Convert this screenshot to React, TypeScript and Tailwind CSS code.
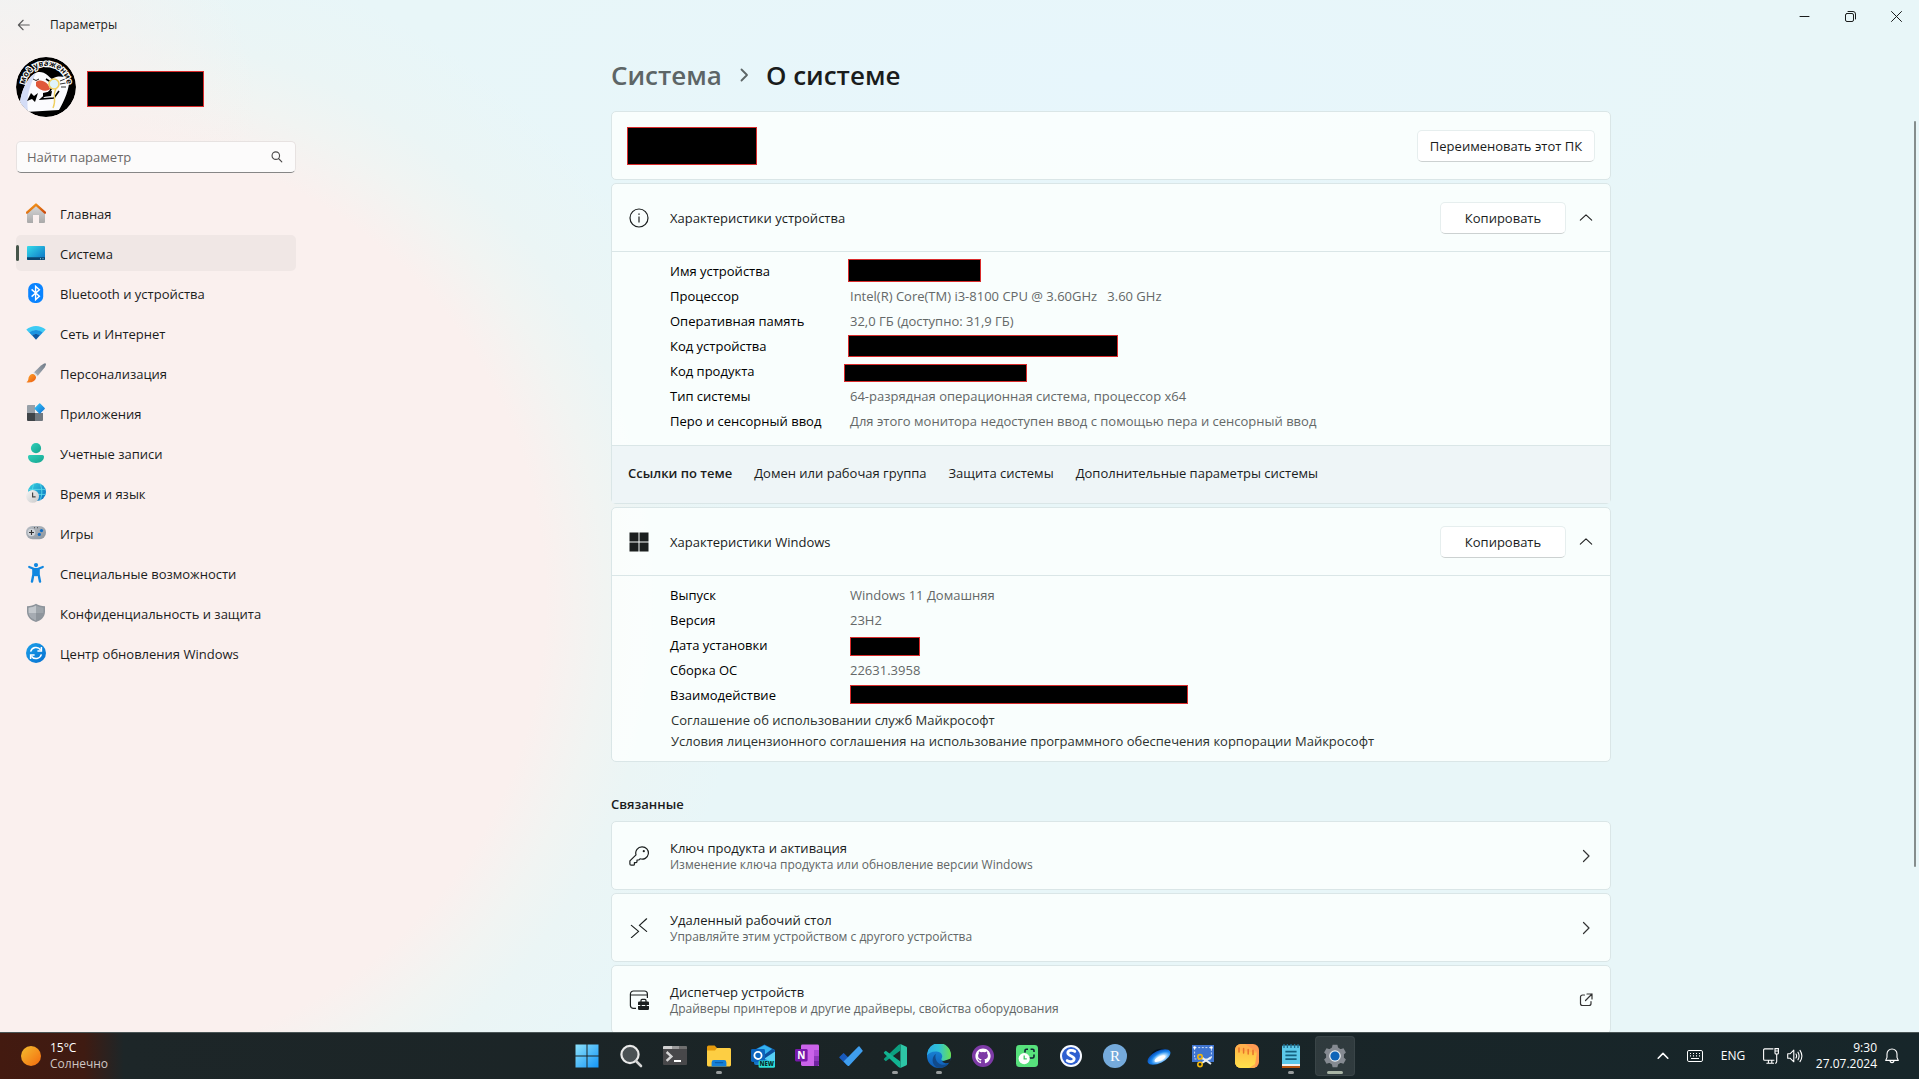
import React from "react";

/* ---------- Avatar ---------- */

const Avatar = () => (
  <svg viewBox="0 0 60 60" className="size-[60px] shrink-0 rounded-full" role="img" aria-label="Аватар">
    <defs>
      <path id="avatarArc" d="M9 29 A21 20 0 0 1 51 29" />
      <clipPath id="avatarClip">
        <circle cx="30" cy="30" r="30" />
      </clipPath>
    </defs>
    <g clipPath="url(#avatarClip)">
      <rect width="60" height="60" fill="#000" />
      <path d="M4 46 C6 30 14 17 22 15 C29 14 33 20 36 22 C42 18 48 20 53 21 C54 32 48 44 43 53 L10 55 Z" fill="#fbfbfe" />
      <path d="M4 46 C5 34 12 19 20 16 C14 28 10 38 12 55 Z" fill="#d3dcf6" />
      <path d="M30 22 L38 27 L34 34 L25 42 L38 41 L43 34" fill="none" stroke="#000" strokeWidth="1.6" />
      <path d="M27 36 L36 34 L35 39 L27 40 Z" fill="#000" />
      <path d="M20 25 C25 21 33 26 34 32 C31 35 24 34 20 29 Z" fill="#e0583a" />
      <path d="M17 22 q3 3 6 0" fill="none" stroke="#222" strokeWidth="1" />
      <path d="M11 44 L15 36 L18 39 L22 36 L19 45 L16 42 Z" fill="#000" />
      <circle cx="38" cy="27" r="5" fill="#dff3fb" stroke="#f0d060" strokeWidth="1.6" />
      <path d="M40 32 C36 38 41 43 37 51" fill="none" stroke="#f0d060" strokeWidth="1.4" />
      <path d="M44 24 l5 -2 M44 27 l6 -1 M45 30 l5 0" stroke="#333" strokeWidth="1" />
      <text fontSize="8" fontWeight="700" fill="#111" stroke="#fff" strokeWidth="2.2" paintOrder="stroke" textAnchor="middle" fontFamily="Open Sans, sans-serif">
        <textPath href="#avatarArc" startOffset="50%">моё уважение</textPath>
      </text>
    </g>
  </svg>
);

/* ---------- Navigation icons ---------- */

const HomeIcon = () => (
  <svg viewBox="0 0 20 20" className="size-5">
    <defs>
      <linearGradient id="homeG" x1="0" y1="0" x2="0" y2="1">
        <stop offset="0" stopColor="#d9d9d9" />
        <stop offset="1" stopColor="#a9a9a9" />
      </linearGradient>
      <linearGradient id="homeR" x1="0" y1="0" x2="1" y2="1">
        <stop offset="0" stopColor="#f9a01b" />
        <stop offset="1" stopColor="#cc4a0c" />
      </linearGradient>
    </defs>
    <path d="M1 9.5 L10 2 L19 9.5 V19 a1 1 0 0 1 -1 1 H13 V12 H7 V20 H2 a1 1 0 0 1 -1 -1 Z" fill="url(#homeG)" />
    <path d="M1 9.6 L10 1.6 L19 9.6" fill="none" stroke="url(#homeR)" strokeWidth="2.4" strokeLinejoin="round" strokeLinecap="round" />
  </svg>
);

const SystemIcon = () => (
  <svg viewBox="0 0 20 20" className="size-5">
    <defs>
      <linearGradient id="sysG" x1="0" y1="0" x2="1" y2="1">
        <stop offset="0" stopColor="#35dcea" />
        <stop offset="1" stopColor="#0b6fc4" />
      </linearGradient>
    </defs>
    <rect x="1" y="3" width="18" height="14" rx="1" fill="url(#sysG)" />
    <path d="M1 14.3 H19 V16 a1 1 0 0 1 -1 1 H2 a1 1 0 0 1 -1 -1 Z" fill="#0b4670" />
    <path d="M14 15.2 h1 v1 h-1 z M16.5 15.2 h1 v1 h-1 z" fill="#8fd8ee" />
  </svg>
);

const BluetoothIcon = () => (
  <svg viewBox="0 0 20 20" className="size-5">
    <rect x="2.2" y="0" width="15" height="20" rx="6.5" fill="#0a84ff" />
    <path d="M5.6 6.4 L13.4 13.2 L9.6 16.6 V3.4 L13.4 6.8 L5.6 13.6" fill="none" stroke="#fff" strokeWidth="1.4" />
  </svg>
);

const WifiIcon = () => (
  <svg viewBox="0 0 20 20" className="size-5">
    <path d="M0.3 6.6 C6 1.8 14 1.8 19.7 6.6 L16.8 9.8 C13 6.4 7 6.4 3.2 9.8 Z" fill="#3dcbf4" />
    <path d="M3.2 9.6 C7 6.2 13 6.2 16.8 9.6 L13.8 12.8 C11.5 10.8 8.5 10.8 6.2 12.8 Z" fill="#1a93e0" />
    <path d="M6.2 12.6 C8.5 10.6 11.5 10.6 13.8 12.6 L10 16.8 Z" fill="#0c59a4" />
  </svg>
);

const BrushIcon = () => (
  <svg viewBox="0 0 20 20" className="size-5">
    <defs>
      <linearGradient id="brG" x1="1" y1="0" x2="0" y2="1">
        <stop offset="0" stopColor="#6f7b87" />
        <stop offset="1" stopColor="#a9b1ba" />
      </linearGradient>
      <linearGradient id="brO" x1="0" y1="0" x2="1" y2="1">
        <stop offset="0" stopColor="#ffa92e" />
        <stop offset="1" stopColor="#ea5a10" />
      </linearGradient>
    </defs>
    <path d="M19.6 0.4 C20.6 1.4 19.4 3.4 18 5.3 L11.4 13.2 L7.6 9.8 L15 2.6 C17 0.9 18.8 -0.2 19.6 0.4 Z" fill="url(#brG)" />
    <path d="M6.4 11 C8 10.6 10.4 12.8 10 14.8 C9.4 18.6 4.6 20.2 0.4 19.2 C2.4 18.4 2.2 16.6 2.6 14.6 C3.2 12.4 4.8 11.2 6.4 11 Z" fill="url(#brO)" />
    <path d="M7.4 10 L8.4 9.2 L11.8 12.4 L10.8 13.6 Z" fill="#dfe5ea" />
  </svg>
);

const AppsIcon = () => (
  <svg viewBox="0 0 20 20" className="size-5">
    <defs>
      <linearGradient id="apD" x1="0" y1="0" x2="1" y2="1">
        <stop offset="0" stopColor="#35c3f5" />
        <stop offset="1" stopColor="#0f74d6" />
      </linearGradient>
    </defs>
    <path d="M1 3 a1 1 0 0 1 1 -1 H9 V10 H1 Z" fill="#97a0a8" />
    <path d="M1 10 H9 V18 H2 a1 1 0 0 1 -1 -1 Z" fill="#3f4448" />
    <path d="M9 10 H17 V17 a1 1 0 0 1 -1 1 H9 Z" fill="#70787f" />
    <path d="M13.7 1 L18.2 5.5 L13.7 10 L9.2 5.5 Z" fill="url(#apD)" stroke="url(#apD)" strokeWidth="1.4" strokeLinejoin="round" />
  </svg>
);

const AccountIcon = () => (
  <svg viewBox="0 0 20 20" className="size-5">
    <defs>
      <linearGradient id="acG" x1="0" y1="0" x2="1" y2="1">
        <stop offset="0" stopColor="#2fd0ba" />
        <stop offset="1" stopColor="#15a48e" />
      </linearGradient>
    </defs>
    <circle cx="10" cy="5.1" r="5.1" fill="url(#acG)" />
    <path d="M3.6 12 H16.4 A1.6 1.6 0 0 1 18 13.6 C18 17.8 14.6 20 10 20 C5.4 20 2 17.8 2 13.6 A1.6 1.6 0 0 1 3.6 12 Z" fill="url(#acG)" />
  </svg>
);

const TimeIcon = () => (
  <svg viewBox="0 0 20 20" className="size-5">
    <defs>
      <linearGradient id="tmG" x1="0" y1="0" x2="1" y2="1">
        <stop offset="0" stopColor="#36d6df" />
        <stop offset="1" stopColor="#0a6cc0" />
      </linearGradient>
      <linearGradient id="tmC" x1="0" y1="0" x2="1" y2="1">
        <stop offset="0" stopColor="#f6f6f6" />
        <stop offset="1" stopColor="#c8c8c8" />
      </linearGradient>
    </defs>
    <circle cx="11" cy="9" r="9" fill="url(#tmG)" />
    <path d="M3 6.4 H19.4 M3 11.4 H19.4 M8 0.6 C5.6 6 6 12 8 17 M14 0.6 C16.4 6 16.4 12 14 17.2" stroke="#5fe0ee" strokeWidth="0.8" fill="none" />
    <circle cx="6.6" cy="13.4" r="6.4" fill="url(#tmC)" />
    <path d="M6.6 9.4 V13.8 H9.6" stroke="#444" strokeWidth="1.2" fill="none" />
  </svg>
);

const GamesIcon = () => (
  <svg viewBox="0 0 20 20" className="size-5">
    <defs>
      <linearGradient id="gmG" x1="0" y1="0" x2="1" y2="1">
        <stop offset="0" stopColor="#b9bfc6" />
        <stop offset="1" stopColor="#8c949c" />
      </linearGradient>
    </defs>
    <rect x="0" y="3" width="20" height="13.2" rx="6.4" fill="url(#gmG)" />
    <circle cx="5.5" cy="9.5" r="3.8" fill="#d0d4d9" />
    <path d="M5.5 7 V12 M3 9.5 H8" stroke="#333" strokeWidth="1.1" />
    <circle cx="15.5" cy="7.6" r="1.6" fill="#0f6cc4" />
    <circle cx="13.3" cy="11.4" r="1.6" fill="#0f6cc4" />
    <path d="M8 4.2 h1 v1 h-1 z M11 4.2 h1 v1 h-1 z" fill="#444" />
  </svg>
);

const AccessIcon = () => (
  <svg viewBox="0 0 20 20" className="size-5">
    <circle cx="10" cy="2.1" r="2.1" fill="#1187e0" />
    <path d="M3.2 4 L8.2 6 H11.8 L16.8 4" stroke="#1187e0" strokeWidth="2.2" strokeLinecap="round" strokeLinejoin="round" fill="none" />
    <path d="M7.4 6.4 H12.6 V11.6 L14 18.6 M12.6 11.6 L10 12 L7.4 11.6 M7.4 6.4 V11.6 L6 18.6" stroke="#1187e0" strokeWidth="2.4" strokeLinecap="round" strokeLinejoin="round" fill="none" />
    <path d="M7 6 H13 V12 H7 Z" fill="#1187e0" />
  </svg>
);

const ShieldIcon = () => (
  <svg viewBox="0 0 20 20" className="size-5">
    <path d="M10 0.8 C12.4 2.4 15.4 3.2 19 3.3 V8.4 C19 13.8 15.2 17.2 10 19 C4.8 17.2 1 13.8 1 8.4 V3.3 C4.6 3.2 7.6 2.4 10 0.8 Z" fill="#8d949b" />
    <path d="M10 2.6 C12 3.8 14.6 4.5 17.5 4.7 V8.6 C17.5 13 14.4 15.8 10 17.4 Z" fill="#9ea5ab" />
    <path d="M10 2.6 C8 3.8 5.4 4.5 2.5 4.7 V8.6 C2.5 13 5.6 15.8 10 17.4 Z" fill="#c2c7cc" />
    <path d="M2.7 10 H17.3 C16.6 13.6 13.8 16 10 17.4 C6.2 16 3.4 13.6 2.7 10 Z" fill="#707880" opacity="0.35" />
  </svg>
);

const UpdateIcon = () => (
  <svg viewBox="0 0 20 20" className="size-5">
    <defs>
      <linearGradient id="upG" x1="0" y1="0" x2="1" y2="1">
        <stop offset="0" stopColor="#1ba1ea" />
        <stop offset="1" stopColor="#0670d0" />
      </linearGradient>
    </defs>
    <circle cx="10" cy="10" r="10" fill="url(#upG)" />
    <path d="M4.6 8.6 A5.6 5.6 0 0 1 14.6 6.8 M15.4 11.4 A5.6 5.6 0 0 1 5.4 13.2" fill="none" stroke="#fff" strokeWidth="1.5" />
    <path d="M15.4 4 V8 H11.4 M4.6 16 V12 H8.6" fill="none" stroke="#fff" strokeWidth="1.5" />
  </svg>
);

/* ---------- Line icons ---------- */

const Line = ({ d, className = "size-5", width = 1.3, box = 20 }: { d: string; className?: string; width?: number; box?: number }) => (
  <svg viewBox={`0 0 ${box} ${box}`} className={className} fill="none" stroke="currentColor" strokeWidth={width} strokeLinecap="round" strokeLinejoin="round" aria-hidden="true">
    <path d={d} />
  </svg>
);

const InfoIcon = () => (
  <svg viewBox="0 0 20 20" className="size-5" fill="none" stroke="#1b1f1f" strokeWidth="1.2" aria-hidden="true">
    <circle cx="10" cy="10" r="9" />
    <path d="M10 8.6 V14.4" />
    <path d="M10 5.4 V6.8" strokeWidth="1.4" />
  </svg>
);

const WindowsIcon = () => (
  <svg viewBox="0 0 20 20" className="size-5" fill="#1b1f1f" aria-hidden="true">
    <path d="M.5 .5 H9.5 V9.5 H.5 Z M10.5 .5 H19.5 V9.5 H10.5 Z M.5 10.5 H9.5 V19.5 H.5 Z M10.5 10.5 H19.5 V19.5 H10.5 Z" />
  </svg>
);

const KeyIcon = () => (
  <svg viewBox="0 0 20 20" className="size-5" fill="none" stroke="#1b1f1f" strokeWidth="1.2" strokeLinejoin="round" aria-hidden="true">
    <path d="M13 .8 A6.2 6.2 0 0 0 7 8.8 L.9 14.9 V18 A1.2 1.2 0 0 0 2.1 19.2 H4.4 A1 1 0 0 0 5.4 18.2 V16.6 H7 A1 1 0 0 0 8 15.6 V14 H9.4 A1 1 0 0 0 10.2 13.6 L11 12.8 A6.2 6.2 0 1 0 13 .8 Z" />
    <circle cx="14.8" cy="5.2" r="1.1" fill="#1b1f1f" stroke="none" />
  </svg>
);

const DeviceManagerIcon = () => (
  <svg viewBox="0 0 20 20" className="size-5" fill="none" stroke="#1b1f1f" strokeWidth="1.2" aria-hidden="true">
    <path d="M7 18.4 H4.4 A3 3 0 0 1 1.4 15.4 V4 A3 3 0 0 1 4.4 1 H15.4 A3 3 0 0 1 18.4 4 V8 M1.4 5 H18.4" />
    <path d="M12 12 V10.4 A1 1 0 0 1 13 9.4 H16 A1 1 0 0 1 17 10.4 V12" />
    <path d="M9 12.8 A1.2 1.2 0 0 1 10.2 11.6 H18.8 A1.2 1.2 0 0 1 20 12.8 V15 H9 Z M9 16 H20 V18.8 A1.2 1.2 0 0 1 18.8 20 H10.2 A1.2 1.2 0 0 1 9 18.8 Z" fill="#1b1f1f" stroke="none" />
    <path d="M12 14 V17.4 M17 14 V17.4" stroke="#1b1f1f" strokeWidth="1.4" />
  </svg>
);

/* ---------- Taskbar icons ---------- */

const T = ({ children }: { children: React.ReactNode }) => (
  <svg viewBox="0 0 24 24" className="size-6" aria-hidden="true">
    {children}
  </svg>
);

const StartIcon = () => (
  <T>
    <defs>
      <linearGradient id="stG" gradientUnits="userSpaceOnUse" x1="0" y1="0" x2="24" y2="24">
        <stop offset="0" stopColor="#8fe3fb" />
        <stop offset="1" stopColor="#1193f5" />
      </linearGradient>
    </defs>
    <path d="M.5 .5 H11.5 V11.5 H.5 Z M12.5 .5 H23.5 V11.5 H12.5 Z M.5 12.5 H11.5 V23.5 H.5 Z M12.5 12.5 H23.5 V23.5 H12.5 Z" fill="url(#stG)" />
  </T>
);
const SearchTask = () => (
  <T>
    <circle cx="11" cy="10.5" r="8.6" fill="#4a5154" stroke="#e9e9e9" strokeWidth="2.2" />
    <path d="M17 17 L22 22" stroke="#d5d5d5" strokeWidth="2.6" strokeLinecap="round" />
  </T>
);
const TerminalIcon = () => (
  <T>
    <rect x="0" y="3" width="24" height="18" rx="1" fill="#48484a" />
    <path d="M1 2 H9 V5 H0 V3 A1 1 0 0 1 1 2 Z" fill="#d0d0d0" />
    <path d="M9 2 H16 V5 H9 Z" fill="#9b9b9b" />
    <path d="M16 2 H23 A1 1 0 0 1 24 3 V5 H16 Z" fill="#6f6f6f" />
    <path d="M3.6 8 L8.4 12.4 L3.6 16.8" fill="none" stroke="#d6d6d6" strokeWidth="2.4" />
    <path d="M11 17 H18" stroke="#fff" strokeWidth="2" />
  </T>
);
const ExplorerIcon = () => (
  <T>
    <path d="M0 3 A1.6 1.6 0 0 1 1.6 1.4 H7.6 L10 4 H22.4 A1.6 1.6 0 0 1 24 5.6 V8 H0 Z" fill="#e59a0c" />
    <path d="M0 6.6 H8 L10 4 H22.4 A1.6 1.6 0 0 1 24 5.6 V21 A1.4 1.4 0 0 1 22.6 22.4 H1.4 A1.4 1.4 0 0 1 0 21 Z" fill="#fdce43" />
    <path d="M4.6 22.4 V18.4 A2.4 2.4 0 0 1 7 16 H17 A2.4 2.4 0 0 1 19.4 18.4 V22.4 Z" fill="#1580d8" />
    <path d="M8.4 18.6 H15.6" stroke="#0b5ea8" strokeWidth="1.4" strokeLinecap="round" />
  </T>
);
const OutlookIcon = () => (
  <T>
    <path d="M3 6 L13.5 .4 L24 6 V19 A2 2 0 0 1 22 21 H5 A2 2 0 0 1 3 19 Z" fill="#1673c6" />
    <path d="M6 5 L13.5 1.2 L21 5 V12 L13.5 16 L6 12 Z" fill="#35b2f0" />
    <path d="M13 11 L21 5 L24 6.6 V9 L14 15 Z" fill="#0d4f9c" />
    <path d="M13.5 14.6 L24 7.4 V20 H13.5 Z" fill="#56d0f7" />
    <path d="M13.5 14.6 L24 20.5 H5 Z" fill="#1b87dc" />
    <rect x="0" y="5" width="14" height="13" rx="1.4" fill="#0c64bd" />
    <circle cx="7" cy="11.4" r="3.6" fill="none" stroke="#fff" strokeWidth="1.8" />
    <rect x="7.6" y="16.4" width="16.4" height="7.4" rx="1.4" fill="#2ce0d8" />
    <text x="15.8" y="22.4" fontSize="6" fontWeight="800" textAnchor="middle" fill="#09302f" fontFamily="Open Sans, sans-serif">NEW</text>
  </T>
);
const OneNoteIcon = () => (
  <T>
    <path d="M7.4 .5 H22.6 A1.4 1.4 0 0 1 24 1.9 V22 H7.4 A1.4 1.4 0 0 1 6 20.6 V1.9 A1.4 1.4 0 0 1 7.4 .5 Z" fill="#cb63ea" />
    <path d="M19 6 H24 V12 H19 Z" fill="#ad4bd6" />
    <path d="M19 12 H24 V17 H19 Z" fill="#8c35b9" />
    <path d="M19 17 H24 V20.6 A1.4 1.4 0 0 1 22.6 22 H19 Z" fill="#7023a0" />
    <rect x="0" y="5" width="12.6" height="12.4" rx="1.3" fill="#7719aa" />
    <text x="6.3" y="14.8" fontSize="10" fontWeight="700" textAnchor="middle" fill="#fff" fontFamily="Open Sans, sans-serif">N</text>
  </T>
);
const TodoIcon = () => (
  <T>
    <path d="M4 9.4 L.6 12.8 A.8 .8 0 0 0 .6 14 L8 21.2 L12.6 16.8 L5.2 9.4 A.8 .8 0 0 0 4 9.4 Z" fill="#195abd" />
    <path d="M19.4 2.6 L4.6 17.6 L8.4 21.4 A1.4 1.4 0 0 0 10.4 21.4 L23.4 7.6 A1 1 0 0 0 23.4 6.2 L20.6 2.6 A.9 .9 0 0 0 19.4 2.6 Z" fill="#3f9eee" />
  </T>
);
const VSCodeIcon = () => (
  <T>
    <path d="M17.4 0 L23 2.4 A1.6 1.6 0 0 1 24 4 V20 A1.6 1.6 0 0 1 23 21.6 L17.4 24 Z" fill="#2dc6a6" />
    <path d="M17.4 0 L15.4 1 L1.2 14.4 A.9 .9 0 0 0 1.2 15.8 L2.8 17.2 L17.4 6.4 Z" fill="#0c9f80" />
    <path d="M17.4 24 L15.4 23 L1.2 9.4 A.9 .9 0 0 1 1.2 8 L2.8 6.8 L17.4 17.6 Z" fill="#12b391" />
  </T>
);
const EdgeIcon = () => (
  <T>
    <defs>
      <linearGradient id="edA" x1="0" y1="0" x2="1" y2="0">
        <stop offset="0" stopColor="#2aa9e8" />
        <stop offset=".5" stopColor="#2fc2d6" />
        <stop offset="1" stopColor="#6be04e" />
      </linearGradient>
      <linearGradient id="edB" x1="0" y1="0" x2="0" y2="1">
        <stop offset="0" stopColor="#1c8fdc" />
        <stop offset="1" stopColor="#0f5db8" />
      </linearGradient>
    </defs>
    <circle cx="12" cy="12" r="12" fill="url(#edB)" />
    <path d="M0 11.4 A12 12 0 0 1 24 10.8 C24.4 15 21 17.2 17.6 17 C14.8 16.8 13.8 15.6 14.6 14.4 C16.4 11.6 14.2 7.6 9.6 7.4 C4.8 7.2 1.4 9 0 11.4 Z" fill="url(#edA)" />
    <path d="M8.4 12.4 C8.4 17 12 20.8 16.8 20.8 C19.4 20.8 21.4 19.8 22.6 18.6 A12 12 0 0 1 12.6 24 C8 23.6 5.4 19.6 5.6 16 C5.8 13 7 11 9.4 9.8 C8.6 10.6 8.4 11.4 8.4 12.4 Z" fill="#114a8b" />
    <path d="M22.6 18.6 C20 20 17 19.4 15 17.6 L24 14.6 Z" fill="#1b2528" />
  </T>
);
const GithubIcon = () => (
  <T>
    <circle cx="12" cy="12" r="11" fill="#7d3aa6" />
    <path d="M12 4.4 C7.8 4.4 4.4 7.8 4.4 12 C4.4 15.4 6.6 18.2 9.6 19.2 C10 19.3 10.1 19 10.1 18.8 V17.4 C8 17.9 7.5 16.4 7.5 16.4 C7.2 15.5 6.7 15.3 6.7 15.3 C6 14.8 6.8 14.8 6.8 14.8 C7.5 14.9 7.9 15.6 7.9 15.6 C8.6 16.8 9.7 16.4 10.1 16.2 C10.2 15.7 10.4 15.4 10.6 15.2 C8.9 15 7.1 14.4 7.1 11.5 C7.1 10.6 7.4 9.9 7.9 9.4 C7.8 9.2 7.6 8.4 8 7.4 C8 7.4 8.6 7.2 10.1 8.2 A7 7 0 0 1 13.9 8.2 C15.4 7.2 16 7.4 16 7.4 C16.4 8.4 16.2 9.2 16.1 9.4 C16.6 9.9 16.9 10.6 16.9 11.5 C16.9 14.4 15.1 15 13.4 15.2 C13.7 15.4 13.9 15.9 13.9 16.6 V18.8 C13.9 19 14 19.3 14.4 19.2 C17.4 18.2 19.6 15.4 19.6 12 C19.6 7.8 16.2 4.4 12 4.4 Z" fill="#fff" />
  </T>
);
const ClockAppIcon = () => (
  <T>
    <rect x="1" y="1" width="22" height="22" rx="3.4" fill="#57e17c" />
    <path d="M10 8.4 V6.6 A1.4 1.4 0 0 1 11.4 5.2 H13 M15.6 5.2 H17.6 A1.4 1.4 0 0 1 19 6.6 V8 M19 10.6 V12.6 A1.4 1.4 0 0 1 17.6 14 H14" fill="none" stroke="#123" strokeWidth="1.6" />
    <circle cx="9.2" cy="14.6" r="5.6" fill="#fff" />
    <path d="M9.2 11.6 V14.8 H11.8" fill="none" stroke="#40c868" strokeWidth="1.3" />
  </T>
);
const SIcon = () => (
  <T>
    <circle cx="12" cy="12" r="11" fill="#f7f9ff" />
    <circle cx="12" cy="12" r="9" fill="#2f5fd0" />
    <path d="M15.8 7.4 C13 5.4 8.8 6.4 8.8 9 C9 12.2 15.2 11.8 15.2 15 C15 17.6 11 18.6 8.2 16.6" fill="none" stroke="#fff" strokeWidth="2.8" strokeLinecap="round" />
  </T>
);
const RIcon = () => (
  <T>
    <circle cx="12" cy="12" r="12" fill="#75aadb" />
    <text x="12" y="17" fontSize="15" textAnchor="middle" fill="#fff" fontFamily="Liberation Serif, serif">R</text>
  </T>
);
const SaucerIcon = () => (
  <T>
    <defs>
      <radialGradient id="saG" cx=".55" cy=".65" r=".6">
        <stop offset="0" stopColor="#fff" />
        <stop offset=".35" stopColor="#b9e2ff" />
        <stop offset=".7" stopColor="#1b86ee" />
        <stop offset="1" stopColor="#0a58c4" />
      </radialGradient>
    </defs>
    <ellipse cx="11" cy="9" rx="7.4" ry="3.6" fill="#07131f" transform="rotate(-20 11 9)" />
    <ellipse cx="12" cy="13" rx="12.4" ry="6" fill="url(#saG)" transform="rotate(-26 12 13)" />
    <ellipse cx="13" cy="14.6" rx="6" ry="2.2" fill="#fff" transform="rotate(-26 13 14.6)" />
  </T>
);
const SnipIcon = () => (
  <T>
    <rect x="1" y="1" width="22" height="17" fill="#3f74cf" />
    <rect x="3.6" y="3.6" width="16.8" height="11.4" fill="none" stroke="#c9dbf5" strokeWidth="1" strokeDasharray="2 1.6" />
    <circle cx="3.6" cy="3.6" r="1.3" fill="#fff" />
    <circle cx="20.4" cy="3.6" r="1.3" fill="#fff" />
    <path d="M11 13.6 L20 20 M11 19 L20 13.4" stroke="#e8eef4" strokeWidth="2" />
    <circle cx="9" cy="12.8" r="2.2" fill="none" stroke="#f5b80c" strokeWidth="1.6" />
    <circle cx="9" cy="20.4" r="2.2" fill="none" stroke="#f5b80c" strokeWidth="1.6" />
  </T>
);
const StickyIcon = () => (
  <T>
    <defs>
      <linearGradient id="skG" x1="0" y1="0" x2="0" y2="1">
        <stop offset="0" stopColor="#ffbc45" />
        <stop offset="1" stopColor="#ffe14c" />
      </linearGradient>
      <clipPath id="skC">
        <rect width="24" height="24" rx="6" />
      </clipPath>
    </defs>
    <g clipPath="url(#skC)">
      <rect width="24" height="24" fill="#ff9a52" />
      <path d="M0 0 H10 L22 8 L20 24 H0 Z" fill="#ffb04c" />
      <path d="M0 5.4 L21.6 9 L20 20 L14 24 H0 Z" fill="url(#skG)" />
    </g>
    <path d="M4 4 V8 M8.6 4.6 V9 M13.2 5.4 V10 M18 6.2 V10.4" stroke="#e8722a" strokeWidth="1.5" strokeLinecap="round" />
  </T>
);
const NotepadIcon = () => (
  <T>
    <rect x="3" y="1.4" width="18" height="20" rx="1" fill="#5cc9ea" />
    <path d="M5 0 V4 M8.4 0 V4 M12 0 V4 M15.6 0 V4 M19 0 V4" stroke="#1f6f92" strokeWidth="1.3" />
    <path d="M6.4 7.6 H17.6 M6.4 11.4 H17.6 M6.4 15.2 H17.6" stroke="#14607f" strokeWidth="1.7" />
    <rect x="3" y="20" width="18" height="2" fill="#f1f1f1" />
    <rect x="3" y="22" width="18" height="2" fill="#b8560f" />
  </T>
);
const GearIcon = () => (
  <T>
    <g fill="#858a91">
      <circle cx="12" cy="12" r="9" />
      <path d="M9.6 .8 H14.4 L15.4 5 H8.6 Z M9.6 23.2 H14.4 L15.4 19 H8.6 Z" />
      <path d="M9.6 .8 H14.4 L15.4 5 H8.6 Z M9.6 23.2 H14.4 L15.4 19 H8.6 Z" transform="rotate(60 12 12)" />
      <path d="M9.6 .8 H14.4 L15.4 5 H8.6 Z M9.6 23.2 H14.4 L15.4 19 H8.6 Z" transform="rotate(120 12 12)" />
    </g>
    <circle cx="12" cy="12" r="5.8" fill="#e9edf0" />
    <circle cx="12" cy="12" r="4.6" fill="#0f64b8" />
  </T>
);

/* ---------- Shared pieces ---------- */

const Redacted = ({ className }: { className: string }) => (
  <span aria-label="Скрыто" className={`block border border-[#d92b2b] bg-black ${className}`} />
);

const cardClass = "rounded-[5px] border border-[#dae6e7] bg-[#fcfffe]/85";

const PlainButton = ({ children, className }: { children: React.ReactNode; className: string }) => (
  <button className={`h-8 shrink-0 rounded-[5px] border border-[#e6eeee] border-b-[#ccd1d1] bg-white text-center text-[#1a1c1c] ${className}`}>
    {children}
  </button>
);

const UP = "M1.5 10.5 L8 4.5 L14.5 10.5";
const RIGHT = "M5.5 2.5 L11 8 L5.5 13.5";

type Row = { label: string; value?: string; bar?: string };

const deviceRows: Row[] = [
  { label: "Имя устройства", bar: "h-[23px] w-[133px] -ml-0.5" },
  { label: "Процессор", value: "Intel(R) Core(TM) i3-8100 CPU @ 3.60GHz   3.60 GHz" },
  { label: "Оперативная память", value: "32,0 ГБ (доступно: 31,9 ГБ)" },
  { label: "Код устройства", bar: "h-[22px] w-[270px] -ml-0.5" },
  { label: "Код продукта", bar: "h-[18px] w-[183px] -ml-1.5 mt-1" },
  { label: "Тип системы", value: "64-разрядная операционная система, процессор x64" },
  { label: "Перо и сенсорный ввод", value: "Для этого монитора недоступен ввод с помощью пера и сенсорный ввод" },
];

const windowsRows: Row[] = [
  { label: "Выпуск", value: "Windows 11 Домашняя" },
  { label: "Версия", value: "23H2" },
  { label: "Дата установки", bar: "h-[19px] w-[70px] mt-1" },
  { label: "Сборка ОС", value: "22631.3958" },
  { label: "Взаимодействие", bar: "h-[19px] w-[338px]" },
];

const Specs = ({ rows }: { rows: Row[] }) => (
  <dl>
    {rows.map((r) => (
      <div key={r.label} className="flex h-[25px] items-center">
        <dt className="w-[180px] shrink-0 text-black">{r.label}</dt>
        <dd className="whitespace-pre text-[#646868]">{r.bar ? <Redacted className={r.bar} /> : r.value}</dd>
      </div>
    ))}
  </dl>
);

const CardHeader = ({ icon, title }: { icon: React.ReactNode; title: string }) => (
  <div className="flex h-[68px] items-center border-b border-[#dae6e7] pr-4 pl-[17px]">
    {icon}
    <h2 className="ml-[21px] flex-1 text-[#1a1c1c]">{title}</h2>
    <PlainButton className="w-[126px]">Копировать</PlainButton>
    <button aria-label="Свернуть" className="ml-3 flex size-4 items-center justify-center text-[#222]">
      <Line d={UP} box={16} className="size-3.5" />
    </button>
  </div>
);

const navItems: { label: string; icon: React.ReactNode; active?: boolean }[] = [
  { label: "Главная", icon: <HomeIcon /> },
  { label: "Система", icon: <SystemIcon />, active: true },
  { label: "Bluetooth и устройства", icon: <BluetoothIcon /> },
  { label: "Сеть и Интернет", icon: <WifiIcon /> },
  { label: "Персонализация", icon: <BrushIcon /> },
  { label: "Приложения", icon: <AppsIcon /> },
  { label: "Учетные записи", icon: <AccountIcon /> },
  { label: "Время и язык", icon: <TimeIcon /> },
  { label: "Игры", icon: <GamesIcon /> },
  { label: "Специальные возможности", icon: <AccessIcon /> },
  { label: "Конфиденциальность и защита", icon: <ShieldIcon /> },
  { label: "Центр обновления Windows", icon: <UpdateIcon /> },
];

const related = [
  { title: "Ключ продукта и активация", text: "Изменение ключа продукта или обновление версии Windows", icon: <KeyIcon />, external: false },
  {
    title: "Удаленный рабочий стол",
    text: "Управляйте этим устройством с другого устройства",
    icon: <Line d="M2.4 7.4 L9.6 13.4 L2.4 19.6 M17.6 .8 L10.4 7.4 L17.6 13.4" className="size-5 text-[#1b1f1f]" width={1.2} />,
    external: false,
  },
  { title: "Диспетчер устройств", text: "Драйверы принтеров и другие драйверы, свойства оборудования", icon: <DeviceManagerIcon />, external: true },
];

const taskbarApps: { name: string; icon: React.ReactNode; state?: "open" | "active" }[] = [
  { name: "Пуск", icon: <StartIcon /> },
  { name: "Поиск", icon: <SearchTask /> },
  { name: "Терминал", icon: <TerminalIcon /> },
  { name: "Проводник", icon: <ExplorerIcon />, state: "open" },
  { name: "Outlook", icon: <OutlookIcon /> },
  { name: "OneNote", icon: <OneNoteIcon /> },
  { name: "To Do", icon: <TodoIcon /> },
  { name: "VS Code", icon: <VSCodeIcon />, state: "open" },
  { name: "Edge", icon: <EdgeIcon />, state: "open" },
  { name: "GitHub Desktop", icon: <GithubIcon /> },
  { name: "Часы", icon: <ClockAppIcon /> },
  { name: "S", icon: <SIcon /> },
  { name: "R", icon: <RIcon /> },
  { name: "Диск", icon: <SaucerIcon /> },
  { name: "Ножницы", icon: <SnipIcon /> },
  { name: "Записки", icon: <StickyIcon /> },
  { name: "Блокнот", icon: <NotepadIcon />, state: "open" },
  { name: "Параметры", icon: <GearIcon />, state: "active" },
];

const Taskbar = () => (
  <footer className="grid h-[47px] shrink-0 grid-cols-[1fr_auto_1fr] items-center border-t border-[#4a5556] bg-[linear-gradient(90deg,#431a10_0px,#3f1b12_84px,#1d2628_124px,#1a2426_900px,#17262a_100%)] text-xs/4 text-white">
    <button className="flex items-center justify-self-start pl-[21px] text-left">
      <span className="size-5 rounded-full bg-linear-to-br from-[#f2bd2e] to-[#f2680c]" />
      <span className="ml-[9px]">
        <span className="block">15°C</span>
        <span className="block text-[#cfc6c3]">Солнечно</span>
      </span>
    </button>
    <nav aria-label="Панель задач" className="flex pl-0.5">
      {taskbarApps.map((a) => (
        <button
          key={a.name}
          aria-label={a.name}
          className={`relative mx-0.5 flex size-10 items-center justify-center rounded ${a.state === "active" ? "bg-white/10 ring-1 ring-white/5 ring-inset" : ""}`}
        >
          {a.icon}
          {a.state && (
            <span
              className={`absolute bottom-0.5 left-1/2 h-[3px] -translate-x-1/2 rounded-full ${a.state === "active" ? "w-4 bg-[#a9b5a6]" : "w-1.5 bg-[#989c9d]"}`}
            />
          )}
        </button>
      ))}
    </nav>
    <div className="flex items-center justify-self-end pr-5">
      <button aria-label="Скрытые значки" className="flex w-8 justify-center">
        <Line d="M2.5 10.5 L8 5 L13.5 10.5" box={16} className="size-3.5" width={1.8} />
      </button>
      <button aria-label="Клавиатура" className="flex w-8 justify-center">
        <svg viewBox="0 0 16 12" className="h-3 w-4" fill="none" stroke="#fff">
          <rect x=".5" y=".5" width="15" height="11" rx="1.4" />
          <path d="M3 3.5 h1 M6 3.5 h1 M9 3.5 h1 M12 3.5 h1 M3 5.9 h1 M6 5.9 h1 M9 5.9 h1 M12 5.9 h1 M4 8.5 h8" strokeWidth="1.2" />
        </svg>
      </button>
      <button className="w-11 text-center">ENG</button>
      <button aria-label="Сеть и звук" className="ml-2 flex items-center gap-2">
        <svg viewBox="0 0 16 16" className="size-4" fill="none" stroke="#fff" strokeWidth="1.1">
          <path d="M10.4 .9 H1.6 A1 1 0 0 0 .6 1.9 V11.2 A1 1 0 0 0 1.6 12.2 H11.4 M5.4 12.2 V15.2 M8.8 12.2 V15.2 M3.4 15.3 H11" />
          <path d="M12 .6 H15.4 V5 A1 1 0 0 1 14.4 6 H13 A1 1 0 0 1 12 5 Z M12 3 H15.4 M13.7 6 V13.4 A1.8 1.8 0 0 1 12 15.2" />
        </svg>
        <svg viewBox="0 0 16 14" className="h-3.5 w-4" fill="none" stroke="#fff" strokeWidth="1.1" strokeLinejoin="round" strokeLinecap="round">
          <path d="M.7 4.8 H3 L6.8 1.2 V12.8 L3 9.2 H.7 Z M9 5 Q10.2 7 9 9 M11 3.2 Q13.2 7 11 10.8 M13 1.4 Q16.8 7 13 12.6" />
        </svg>
      </button>
      <button className="ml-3 w-[62px] text-right">
        <span className="block">9:30</span>
        <span className="block">27.07.2024</span>
      </button>
      <button aria-label="Уведомления" className="ml-2">
        <svg viewBox="0 0 14 16" className="h-4 w-3.5" fill="none" stroke="#fff" strokeWidth="1.1" strokeLinejoin="round">
          <path d="M7 1 A5 5 0 0 0 2 6 V9.4 L.7 12.4 H13.3 L12 9.4 V6 A5 5 0 0 0 7 1 Z M5 12.6 A2 2 0 0 0 9 12.6" />
        </svg>
      </button>
    </div>
  </footer>
);

export default function App() {
  return (
    <div className="flex h-screen flex-col overflow-hidden font-['Open_Sans','Noto_Sans',sans-serif] text-[13px]/5 text-[#1a1c1c]">
      <div className="flex min-h-0 flex-1 bg-[radial-gradient(circle_at_0px_120px,#faf0ee_0px,#faf0ee00_260px),radial-gradient(circle_at_85px_600px,#faf0ee_460px,#f1f4f2_520px,#ebf5f5_570px,#ebf5f500_660px),radial-gradient(ellipse_700px_200px_at_1100px_80px,#e7f6fc,#e8f6f8)]">
        <aside className="flex w-[304px] shrink-0 flex-col">
          <div className="flex h-[50px] items-center">
            <button aria-label="Назад" className="flex w-12 justify-center text-[#5c5c5c]">
              <Line d="M14 8 H2 M7 2.6 L1.6 8 L7 13.4" box={16} className="size-3.5" />
            </button>
            <span className="ml-0.5 text-xs">Параметры</span>
          </div>
          <div className="flex items-center px-4 pt-[7px]">
            <Avatar />
            <Redacted className="mt-1 ml-[11px] h-9 w-[117px]" />
          </div>
          <label className="mt-6 mr-2 ml-4 flex h-8 items-center rounded-[5px] border border-[#e7e2e1] border-b-[#868686] bg-[#fcfbfb] px-2.5">
            <input type="text" aria-label="Найти параметр" placeholder="Найти параметр" className="min-w-0 flex-1 bg-transparent outline-none placeholder:text-[#6b6868]" />
            <Line d="M10 10 L14.4 14.4 M11.4 6.2 A5 5 0 1 1 1.4 6.2 A5 5 0 1 1 11.4 6.2 Z" box={16} className="mr-0.5 size-3 text-[#4c4a4a]" width={1.5} />
          </label>
          <nav className="mt-[22px] mr-2 ml-4 flex flex-col gap-1">
            {navItems.map((n) => (
              <a key={n.label} href="#" className={`relative flex h-9 items-center gap-3.5 rounded-[5px] pl-2.5 ${n.active ? "bg-[#f0e7e5]" : ""}`}>
                {n.active && <span className="absolute top-2.5 left-0 h-4 w-[3px] rounded-full bg-[#46554a]" />}
                {n.icon}
                <span className="pt-0.5">{n.label}</span>
              </a>
            ))}
          </nav>
        </aside>

        <div className="flex min-w-0 flex-1 flex-col">
          <div className="flex h-8 shrink-0 justify-end">
            <button aria-label="Свернуть окно" className="flex w-[46px] items-center justify-center">
              <Line d="M1 5.5 H10" box={11} className="size-[11px]" width={1} />
            </button>
            <button aria-label="Восстановить" className="flex w-[46px] items-center justify-center">
              <Line d="M2 2.5 H7 A1.5 1.5 0 0 1 8.5 4 V9 A1.5 1.5 0 0 1 7 10.5 H2 A1.5 1.5 0 0 1 .5 9 V4 A1.5 1.5 0 0 1 2 2.5 Z M3 .5 H8 A2.5 2.5 0 0 1 10.5 3 V8" box={11} className="size-[11px]" width={1} />
            </button>
            <button aria-label="Закрыть" className="flex w-[46px] items-center justify-center">
              <Line d="M.5 .5 L10.5 10.5 M10.5 .5 L.5 10.5" box={11} className="size-[11px]" width={1} />
            </button>
          </div>

          <div className="flex min-h-0 flex-1">
            <main className="min-w-0 flex-1 overflow-hidden pl-1">
              <div className="mx-auto max-w-[1000px]">
                <div className="flex h-[79px] items-center pt-1.5 text-[26px]/9 font-semibold">
                  <a href="#" className="text-[#5d6566]">Система</a>
                  <Line d={RIGHT} box={16} className="mx-3.5 size-4 text-[#5d6566]" width={1.8} />
                  <h1>О системе</h1>
                </div>

                <div className="flex flex-col gap-[3px]">
                  <section className={`flex h-[69px] items-center justify-between px-[15px] ${cardClass}`}>
                    <Redacted className="h-[38px] w-[130px]" />
                    <PlainButton className="w-[178px]">Переименовать этот ПК</PlainButton>
                  </section>

                  <section className={cardClass}>
                    <CardHeader icon={<InfoIcon />} title="Характеристики устройства" />
                    <div className="pt-1.5 pb-3 pl-[58px]">
                      <Specs rows={deviceRows} />
                    </div>
                    <div className="flex h-[58px] items-center gap-[22px] border-t border-[#dae6e7] bg-[#eef5f7] pb-1 pl-4">
                      <h3 className="font-semibold">Ссылки по теме</h3>
                      <a href="#">Домен или рабочая группа</a>
                      <a href="#">Защита системы</a>
                      <a href="#">Дополнительные параметры системы</a>
                    </div>
                  </section>

                  <section className={cardClass}>
                    <CardHeader icon={<WindowsIcon />} title="Характеристики Windows" />
                    <div className="pt-1.5 pb-[9px] pl-[58px]">
                      <Specs rows={windowsRows} />
                      <div className="flex flex-col items-start pt-[3px] pl-px leading-[21px] text-[#2c312f]">
                        <a href="#">Соглашение об использовании служб Майкрософт</a>
                        <a href="#">Условия лицензионного соглашения на использование программного обеспечения корпорации Майкрософт</a>
                      </div>
                    </div>
                  </section>
                </div>

                <h2 className="mt-8 mb-[7px] font-semibold">Связанные</h2>
                <div className="flex flex-col gap-[3px]">
                  {related.map((r) => (
                    <a key={r.title} href="#" className={`flex h-[69px] items-center pr-4 pl-[17px] ${cardClass}`}>
                      {r.icon}
                      <span className="ml-[21px] flex-1">
                        <span className="block leading-[18px]">{r.title}</span>
                        <span className="block text-xs/4 text-[#616666]">{r.text}</span>
                      </span>
                      <Line
                        d={r.external ? "M6.5 3 H4.5 A2 2 0 0 0 2.5 5 V11.5 A2 2 0 0 0 4.5 13.5 H11 A2 2 0 0 0 13 11.5 V9.5 M9 2 H14 V7 M14 2 L7.5 8.5" : RIGHT}
                        box={16}
                        className="size-4 text-[#333]"
                        width={1.2}
                      />
                    </a>
                  ))}
                </div>
              </div>
            </main>
            <div className="flex w-[5px] shrink-0 flex-col pt-[89px] pb-[165px]">
              <div className="w-0.5 flex-1 rounded-full bg-[#858d8d]" />
            </div>
          </div>
        </div>
      </div>
      <Taskbar />
    </div>
  );
}
